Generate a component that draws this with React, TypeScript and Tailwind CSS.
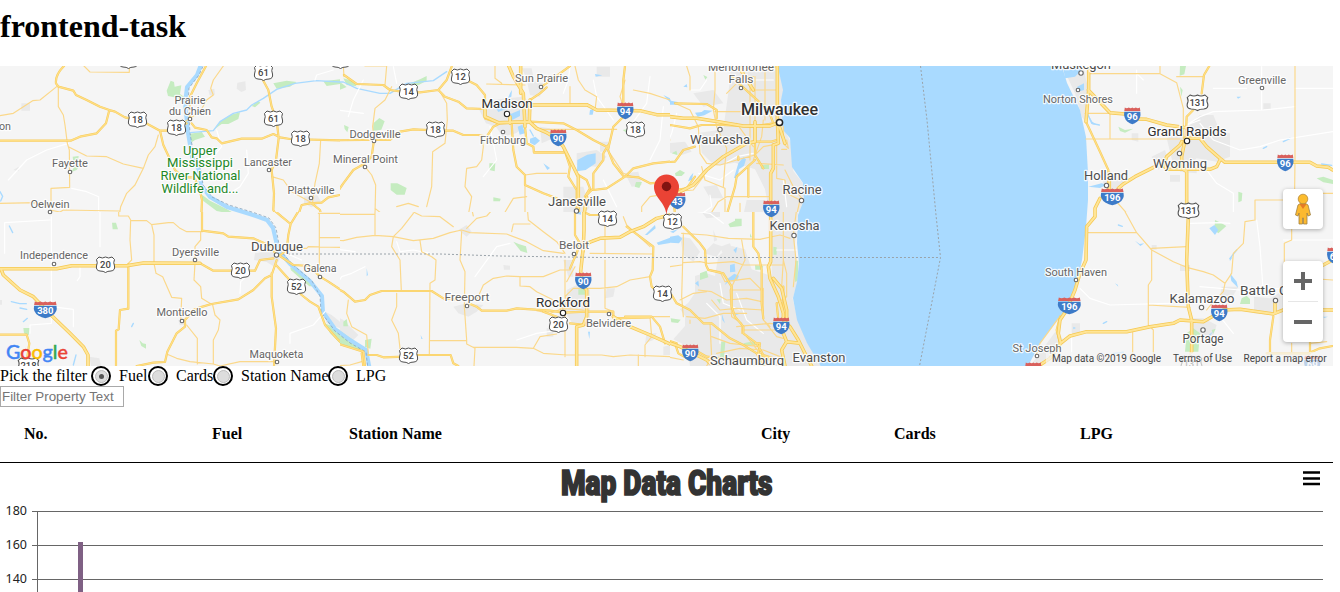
import React from "react";

type Tile = {
  x: number;
  y: number;
  urban?: string[];
  parks?: string[];
  lakes?: string[];
  streams?: string[];
  locals?: string[];
  minor: string[];
  major: string[];
  motorway?: string[];
};

// Each tile covers 340 map pixels and stores its geometry at triple resolution.
const tiles: Tile[] = [
  {
    x: 0,
    y: 60,
    urban: ["M64 130h26v22h-26z", "M712 68l24-4 2 26-14 6-14-10z", "M625 90l18-4 2 18-16 2z", "M40 330l16-10v14z", "M912 410l40-4 12 20-30 16-22-12z"],
    parks: [
      "M500 92l12-30 10 4 2 14 20-4-4 26 12 8v22l-18-18-30-6z",
      "M565 222l40-6 10 14-30 10-14 10z",
      "M640 210l20-25 30-20 30-8-5 20-30 15-20 0-30 22z",
      "M820 70l40-8 30 4-20 14-40 6z",
      "M970 64l50-6v14l-40 6z",
      "M218 290l18-2-2 14-14 4zM222 322l18-6-10 14-16 6z",
      "M600 400l30 22 50 25 30 18-60-12-40-30z",
      "M755 138l20-16 6 6-16 14z",
    ],
    streams: ["M1020 66L950 62L885 70L830 88L790 115L755 135L740 150L700 160L660 185L640 212L570 218", "M0 395l8 14-6 14"],
    locals: ["M25 360L80 300L140 270L205 250", "M215 385L260 395L296 410L296 465", "M610 300L640 290L665 260L650 210", "M740 270L745 340L720 380L690 400", "M945 60L950 45L1000 30"],
    minor: [
      "M170 80L120 120L98 122L40 160L0 167",
      "M175 80L175 140L190 165L195 195L202 250L208 270L209 382L153 385L153 440L110 428L0 430",
      "M205 260L260 288L320 290L370 312L430 325",
      "M475 225L465 260L445 285L430 325L405 375L380 400L362 440L356 478",
      "M252 18L270 36L388 37L388 18",
      "M150 450L180 456L190 450L358 453",
      "M670 18L640 60L632 85L640 105L620 120L600 155L570 175",
      "M962 241L958 310L945 370L938 425",
      "M815 350L850 360L875 395L935 428",
      "M570 175L555 185",
    ],
    major: [
      "M192 18Q165 45 168 70L175 80L220 92L228 105L260 120L300 140L328 150L345 155L375 172L430 185L480 212L505 212L560 190",
      "M328 150L318 190L290 220L240 230L212 242L0 242",
      "M480 212L490 255L525 330L550 352L582 352L598 385L606 420L604 468",
      "M575 190L585 203L620 210L635 232L650 235L665 250L725 236L785 236L820 222L840 232L870 237L1020 241",
      "M570 175L570 110L590 70L618 18",
      "M790 40L790 62L805 90L815 140L830 180L836 235L828 300L815 330L822 400L820 450L830 468",
      "M1020 405L985 412L965 428L930 430L905 435L893 470",
      "M935 430L960 450L964 468",
    ],
  },
  {
    x: 0,
    y: 210,
    urban: ["M765 130l50-8 25 25-15 25-25-16-38-6z", "M965 300l30 15 25 20v20l-40-15z", "M268 440l30 5 5 23h-30z", "M0 270h6v14h-6z", "M535 330l20-4 4 16-20 4z"],
    parks: ["M336 38l12 0 6 20-16 0z", "M70 354l20 0-4 22-14-6z", "M418 390l10 10 10 2v14l-14-8z", "M975 340l45 20v40l-30-30z", "M870 172l30 12 40 45-12 0-55-48z"],
    streams: ["M34 275l25 6 20 0", "M70 335l12-10", "M28 48l10 20", "M60 294l20 4", "M220 465l8-30", "M400 340l-5 10"],
    locals: ["M154 20V290L220 298V350", "M14 130V38L150 30", "M154 298V340L90 345V370", "M300 0V110", "M975 305L940 345L870 370L870 400", "M240 165L240 200L232 212", "M720 250L722 215L740 200", "M870 135L905 150"],
    minor: [
      "M356 -4V18L385 18L392 30L390 90L395 150L385 160",
      "M392 32L440 32L455 44L505 38L520 38L540 55L560 65L608 65",
      "M455 44L462 75L462 160L468 190L488 200L515 262L545 265L542 330",
      "M602 65L602 90L585 110L585 160L582 210L602 230L605 265L638 285",
      "M560 345L592 385L592 462",
      "M638 285L645 315L660 330L655 360L640 390L640 462",
      "M500 432L530 445L570 455L640 462L660 468L720 455L825 455",
      "M860 115L920 115L925 110L1020 112",
      "M955 10H1020M958 10V165M958 83H1020",
    ],
    major: [
      "M606 -4V62L670 70L685 80L760 85L790 98L815 110L828 135",
      "M817 -4L845 20L872 42L865 75L860 120L838 138",
      "M900 -4L872 42",
      "M385 162V296L360 300L356 358L348 362V468",
      "M820 145L780 150L765 182L640 182L600 160",
      "M410 468L460 458L495 456L502 425L530 370L555 350L555 330L580 300L600 292L635 282L715 268L760 240L795 205L815 195L830 150",
      "M815 190L815 260L828 355L822 468",
      "M828 165L860 200L905 255L930 275L955 290L975 345L1010 385L1020 395",
      "M835 135L880 165L930 168L960 200L985 215L1020 238",
      "M0 374L80 374L88 400L82 440",
    ],
    motorway: ["M0 176H170L215 167H380L430 159L600 160", "M4 180L10 195L60 240L100 260L150 312L210 370L250 410L264 435L264 468"],
  },
  {
    x: 330,
    y: 60,
    urban: [
      "M448 150l40-30 90-10 30 20-10 60-40 30-40 10-20-30-30-10z",
      "M575 25l30 0 5 25-20 5zM590 60l50 10-10 40-30-5z",
      "M800 20h40v30h-40zM630 200l30 5 10 30-35 15z",
      "M740 280l60-10 30 20-30 30-60-5z",
      "M885 340l40-5 10 40-30 5zM700 380l60 0 20 60-20 25h-60z",
      "M810 245l30 0v30h-30z",
    ],
    parks: ["M130 190l18-16 16 10-10 25-25 4z", "M182 370l20 0 28 14-6 20-24 0-18-14z", "M478 310l18 0-2 24-16-4z", "M918 366l18 0-8 18-14-4z", "M490 412l22 4-2 8-20 0z", "M40 55l30 8 10 16-30-4z", "M0 60l30 6 20 15-20 8z", "M240 70l30-12 20-10 0 14-30 16z", "M42 195l14 6-4 16-8-10z", "M878 210l20-4v18z"],
    lakes: ["M535 165l35-15 0 18-28 14z", "M563 200l14-6 8 26-16 4z", "M600 236l16-6 14 12-16 14-14-8z", "M742 300l30-16 25-4 0 30-30 20-26 4z", "M540 100l6-10-2 20-10 4z", "M780 150l12-4-4 18-10 0z", "M640 310l20 14-8 6z", "M795 42l22 4-20 4z", "M1000 105l20 10v12z", "M495 140l25-14 10 20-25 10z"],
    streams: ["M0 66L40 66L80 85L150 100L180 100L230 70L310 62L350 35", "M600 210l10 18"],
    locals: ["M200 70L190 20", "M100 60L70 120L55 170", "M720 20L715 60L700 100", "M790 60L800 110L850 180", "M960 50L950 130L900 200", "M480 200L500 300L460 350", "M1000 140L990 240L960 300", "M820 360L860 440", "M20 150L100 160"],
    minor: [
      "M40 18L42 50M105 18H170L165 75",
      "M185 80L165 120L135 145L128 200L132 240",
      "M330 95L350 130L352 180L345 250L308 275L305 380L290 440",
      "M105 320L125 345L137 375L135 465",
      "M455 230L460 260L455 300L440 320L410 325L405 380L425 410L415 465",
      "M470 72L585 75M495 18V55L515 70",
      "M735 18L745 60L765 90L800 110L795 150",
      "M585 345L620 340L710 340M585 375V465",
      "M520 465L550 415L590 410",
      "M0 440L30 465M135 445L160 465M200 440L235 430L265 440",
      "M840 280L880 340L905 350",
      "M885 60L870 110L882 145",
      "M610 275H700",
      "M910 90L960 100L1020 120",
      "M630 208H860",
      "M935 465V440L960 410L1020 400",
      "M720 80L720 130",
    ],
    major: [
      "M42 45L80 72L160 75L180 90L215 95L270 97L325 90L350 60L365 20",
      "M400 55L440 75L465 105L465 140",
      "M325 90L345 110L385 125L410 145L465 147",
      "M0 241L100 240L180 240L210 215L250 208L330 212L370 212L400 225L445 225L470 230L490 200L510 190",
      "M132 240L125 290L105 310L70 330L40 370L20 400L0 412",
      "M650 82L630 100L600 120M720 18L690 40L635 80",
      "M600 185L700 190L740 210L790 240L830 260L850 310L880 348L925 352L960 370L1020 365",
      "M545 190L550 270L560 320L585 345L585 375L640 400L680 415",
      "M835 255L820 280L820 300L790 340L790 385",
      "M790 390L830 385L885 350L910 325L970 310L1020 305",
      "M745 345L770 360L780 385L765 410L790 385",
      "M700 260L720 320L715 350L740 390L740 465",
      "M885 18L880 60L880 150M465 140L465 175L510 190L600 185",
      "M585 200L590 250L610 260L612 278H700",
      "M835 265L850 200L880 170",
    ],
    motorway: ["M535 15L550 50L580 100L585 200M572 18V100M600 120L598 185M595 135L770 134L800 150L930 152L980 164H1020", "M598 185L620 205L650 218L680 235L700 260L725 310L745 350V465", "M465 140V170L505 188L600 185M540 190V170M770 412L762 465"],
  },
  {
    x: 330,
    y: 210,
    urban: ["M370 290l40-10 50 5-20 20-25 15-30-10z", "M385 60l25-15 15 20-15 15z", "M710 240l40-20 30 20v90l-50 15-25-40z", "M700 150l30 0 0 50-15 0z", "M830 235l25 0-5 25-25 5z", "M520 165l20 2 0 12-18 0z", "M0 310l40 20 45 45-20 20-65-60z", "M950 370l30 0-10 20-25 10z", "M1000 410l20-5v30h-20z", "M650 355l20 0v25h-20z"],
    parks: ["M550 95l18 8 20 6 4 20-20-6z", "M40 335l10-8 4 22-14 0z", "M0 350l35 15 70 50-5 8-70-20-30-35z", "M105 390l20-4-4 30-16-5z", "M745 238l20-2 0 18-20 0z", "M50 60l8 0z"],
    lakes: ["M945 75l30-30 2 10-25 20z", "M980 98l40-15v16l-35 6z", "M110 175l4 20-4 4z", "M272 375l6 12-4 0z", "M774 365l6 0-2 22z", "M735 10l18-10v14z"],
    streams: [],
    locals: ["M0 115L75 125M200 95L210 125L250 120L300 130", "M10 240L35 200L65 190L105 170", "M560 390L620 370L690 360", "M435 200L500 110L540 100"],
    minor: [
      "M0 90L40 92L80 82L135 76L190 80L250 92L310 85L360 68L395 60L420 68L530 72L590 95L640 122L700 130",
      "M135 -4V76M0 13H135M230 -4L275 18L330 20L350 35L370 50M190 80L215 55L250 10L252 -4",
      "M190 80L185 110L210 150L214 242M270 92L275 125L305 140L318 150L315 210L300 220L298 435",
      "M395 65L390 150L405 185L403 290L410 390L410 402L435 415L432 468",
      "M425 -4L430 18M592 -4L595 30L640 65L680 95L705 130M545 65L550 42L600 42",
      "M410 55L440 25L470 18L490 -4",
      "M200 250L200 290L185 330L205 370L210 415",
      "M55 270L50 310L65 350L110 375L115 430",
      "M440 270L460 225L490 205L530 198L570 200L640 200L690 180L720 180L738 130",
      "M570 200V228L600 230L620 245L670 270M705 150V440M710 215L735 170",
      "M300 392H410M430 412L560 412L610 415L630 380L680 372M610 415L640 430L710 435H815L850 440L900 435L1020 440",
      "M690 295L720 280L705 260L730 235H810L860 230L900 210L960 200",
      "M825 150V295L850 305M825 -4V130M780 130L970 132M0 468L60 465L95 455M925 435V468M945 440V405L965 380L960 320L1020 320",
      "M620 302L660 310L700 295L760 300",
      "M880 20L890 45L960 110",
    ],
    major: [
      "M0 225L40 245L75 275L105 270L120 255L155 243L305 243L340 265L380 268",
      "M415 280L440 290L455 302L530 302L560 295L660 302L700 308L770 305L850 305L850 325L960 322",
      "M115 435L140 435L160 442L225 440M240 435H362L370 460L385 468",
      "M0 370L20 400L100 425L105 468M95 430L100 468",
      "M735 -4V75L750 100L740 130L720 175",
      "M820 85L790 90L765 110L755 140",
      "M890 50L970 110L968 180L960 200L965 230L1000 260",
      "M720 340L770 345L770 320",
      "M640 305L680 320",
      "M885 320H965L990 350L1005 400M820 15L780 15L760 5",
    ],
    motorway: ["M762 -4V60L760 110L752 185L760 230L770 240V320L760 345L740 350V468", "M770 100L810 85L870 82L900 65L940 50L980 25L1020 15", "M850 320L900 350L960 375L1020 402"],
  },
  {
    x: 640,
    y: 60,
    urban: [
      "M270 60l60-40 85-2 15 70-5 40 10 85 20 40 5 80 35 45-5 50-10 40-90 0-15-80-30-60-60-20-60 10-40-40-5-60 70-10z",
      "M260 18h150v80h-110z",
      "M75 250l60-5 20 30-30 10-50-10z",
      "M160 100l60-10 30 40-60 10z",
      "M190 380l40-5 20 40-40 0z",
      "M320 420h60v45h-70z",
    ],
    parks: ["M105 340l15-10 15 8-10 10-18 0z", "M362 315l25-2 0 14-24 0z", "M95 280l14-8 4 14z", "M0 370l8 0v6z", "M190 45l12 6-6 8z"],
    lakes: ["M75 120l10-14 8 16 20 4 0 8-25 0z", "M165 158l20-2 8-6 25 2-25 14-20 4z", "M295 310l15-18 8 6-6 20-15 10-5 26-10 0z", "M150 350l10-12-4 22-12 4z", "M130 80l10-8 2 10zM80 295l8 6-10 4z", "M170 450l10-15z"],
    locals: ["M110 160L95 220L60 300L20 330", "M175 340L240 360L280 330", "M40 60L30 130M200 60L180 90L150 90", "M210 405L215 440L180 465", "M330 60L400 60M255 310L290 290L340 280", "M430 360L440 440"],
    minor: [
      "M0 85L60 110L85 120M80 18V80L75 100M140 18L150 50L150 90",
      "M0 250L0 240L60 250L90 240",
      "M225 18V90L220 150L230 200L260 265L255 310L250 380",
      "M105 130L150 150L160 170L175 200L180 280L200 310L240 315L290 300L345 285",
      "M185 320L195 360L255 385V465",
      "M225 155H330M330 50V300M345 50V190M375 18V180M350 30L415 20M330 90H410",
      "M430 200V250L445 265L440 240M345 285L370 260L420 250",
      "M410 250L410 355L435 360L440 400L480 420L470 465",
      "M435 330L460 380L485 415M350 310L430 315",
      "M345 240L320 250M100 395L160 390L190 350",
      "M260 100L280 80L310 50L340 50",
      "M210 465L235 425L260 410H390M0 310L20 335L30 370",
      "M370 180L365 230L340 300",
      "M300 465V430M290 190L340 260M440 268H425",
    ],
    major: [
      "M0 305L60 308L105 305L130 270L165 260M0 365L45 367",
      "M105 130L200 132L230 150V175M0 206H45L90 195L150 205L185 195H250L340 200L400 190",
      "M295 300V290M325 318V410M345 190V285L370 325",
      "M345 245H395L410 240",
      "M260 465L285 380L290 350L345 300",
      "M275 50L340 110L385 150L400 190",
      "M100 410L105 465M105 390L140 385L165 350",
    ],
    motorway: ["M0 154H40L75 168L130 175H170L235 185L310 198H390L410 190", "M412 18V180L415 250L400 255V325L392 340V465", "M295 18L340 90M415 190L435 250", "M345 185V245L320 250L250 290L200 330L160 375L110 400L80 440L60 465"],
  },
  {
    x: 640,
    y: 210,
    urban: [
      "M395 0h80l-10 100 8 120-15 45 15 65 70 138H150l-10-60-40-20 35-40 0-30-15-20 25-20 20-30 0-50 30-10 30 10 10-60 40-30 40 10 20 60 60 20z",
      "M190 130l30-30 30 10-20 30zM120 80l30 5 30 40-20 30-30-20z",
      "M180 0h60v20l-40 5z",
      "M240 110l30-10 10 30-30 5zM220 60l12 30-10 5z",
      "M10 390l20 15-10 30-20 0z",
    ],
    parks: ["M180 190l20-8 5 20-25 8z", "M265 42l20-10 0-6 20 0v22l-35 4z", "M465 152l10 0-2 60-8 4z", "M92 325l30 4-8 10-20-2z", "M345 165l25 2-4 12-20 0z", "M400 110l10 2 0 22-10 0z", "M310 400l30-6 15 10-40 4z", "M244 395l12 0-4 50-12 0z", "M230 268l12 0-2 14zM430 250l10 10-6 5z", "M330 70l6 12-6 0z"],
    lakes: ["M50 98l30-16 35-6 12 10-10 14-30-2-30 8z", "M18 70l26-22 0 10-22 18z", "M270 165l14-4 2 24-16 2z", "M265 205l18-14 14 6-6 14-22 2-15 12z", "M165 220l10-8 2 18z", "M280 120l12-10-4 20zM285 310l12 2-10 4z", "M90 65l25-8-15 12z", "M245 310l10 30-8-10z"],
    locals: ["M140 0L210 10L250 40M40 20L60 60", "M240 220L250 280L300 300M410 60L470 60M410 120H470", "M290 250L320 330L370 370M60 130V60", "M200 280L240 320L240 400"],
    minor: [
      "M130 70V100L128 155L125 260L130 320M130 158L180 155L205 160L280 155L310 165H430",
      "M35 200L75 180L90 170L125 165M125 70L200 75L265 85L360 88L420 75L450 85",
      "M305 90L315 150L290 200L270 240L275 320L305 340L305 370",
      "M430 -4V75L430 150L425 230M470 -4L460 75L468 150L460 230",
      "M205 178L240 185L255 215L330 205L365 240M175 240L215 245L260 270L320 265L365 275",
      "M120 270L160 250L200 245M275 240H370M210 340L215 440L200 468M215 270L240 300L290 295L370 300",
      "M140 320L195 325L250 310L320 310M290 350L390 340L430 345M305 360H430",
      "M0 440H80L130 450M10 440V385L35 360M150 330V340M35 90L0 70M35 330V205",
      "M215 380L270 400L360 410M230 430L300 415L370 420L420 440M320 380L360 430L370 468",
      "M430 150L440 190L440 260L410 280",
      "M370 330L410 380L430 385M370 235V330L390 350",
    ],
    major: [
      "M0 75L38 110L35 200L45 225L60 240M95 255L110 280L150 300L190 340L215 340L270 385L310 405L350 430L370 465",
      "M130 50L180 100L195 120L198 165L205 180L250 190L275 230V290L285 320L310 350V370L350 400L370 435L400 445",
      "M340 -4V110L355 130L365 180V280L370 325",
      "M0 323H40L70 360L80 390L110 400M410 280L415 330L440 330M430 230L430 300",
      "M105 400L115 430L150 450",
      "M345 400L360 400L355 430L390 450",
      "M165 420L200 440L290 450",
    ],
    motorway: ["M0 365L50 385L120 410L200 450L210 460", "M392 -4V155L385 170L390 205L415 260L430 310L430 330L450 350L475 390L500 440L515 468", "M400 205L425 235L440 300L440 330M430 370L440 395L425 420L435 468", "M0 55L40 35L75 15M440 395L480 400"],
  },
  {
    x: 1000,
    y: 60,
    urban: [
      "M190 25l60-5 15 70-5 100-15-20-20-70z",
      "M500 235l60-30 40-40 40 0 20 50 30 5 0 70-40 15-60-10-40 40-30-20z",
      "M510 345h30v20h-30zM540 300l50 0 0 40-50-5z",
      "M455 290l40-20 10 30-30 30z",
      "M310 340h60v40l-30 10-30-20z",
      "M395 220l20 0 0 25-20-5z",
      "M790 130h22v18h-22z",
    ],
    parks: ["M540 18l18 0-5 25-14 4z", "M355 200l20 10 25-4-25 12-15-5z", "M715 395l12 4-2 24-10 4z", "M950 355l20-5 30 10v12l-30-5z", "M480 75l6 15z", "M540 80l8 10-4 20z"],
    lakes: ["M190 25l25 5 10-10 20 10-20 20-30 5z", "M232 80l20-10 0 20-20 6z", "M265 380l40-10 15 4-20 10z", "M710 110l14 0-10 6z", "M265 165l12 20 15 10-15-2z"],
    streams: ["M262 160L275 190L298 195", "M850 245l20-10M790 265l10-5M965 312l30 4"],
    locals: ["M550 200L600 170L640 155L790 150L885 140", "M410 30V100M640 85H740M785 20V150", "M600 190L640 240L720 270L780 260L840 240L998 215", "M620 330L650 370L700 400V465", "M885 85H998M430 60L410 40M560 195L600 180"],
    minor: ["M270 41H480L530 68L550 145V235M480 18V40M530 50H610", "M255 160H330V237M258 237H540", "M885 18V300L883 465", "M345 420L385 465M765 465V420H860L870 400H998"],
    major: ["M628 18L612 45L605 100M585 130L580 150L560 170L557 240M258 185L300 275L325 330V390", "M265 90L330 158"],
    motorway: [
      "M266 18V90L258 185M265 90L330 158L375 162M410 177L440 178L500 195L560 203",
      "M555 235L600 235L620 260L660 295L675 307H840M870 307H930L950 318L985 322L998 330",
      "M545 245L540 255L500 290L490 315L500 328L630 328L650 320L660 300",
      "M300 415L285 445V470M355 385L370 372L405 350L465 320M555 240L545 290V325L560 335V440",
      "M328 340V390",
    ],
  },
  {
    x: 1000,
    y: 210,
    urban: ["M215 340h25v30l-25 5z", "M570 325h40l40 20-10 30-30 10-30-15z", "M762 260l50 5 30-20v60l-30 10-50-5z", "M665 230l50 0-20 35-35 0z", "M540 165h30v18h-30z", "M455 105l15 0 0 14-15 0z", "M170 360l20 30-30 40-50 38h-20z"],
    parks: ["M645 30l20 10 14 8-24 22-12-10z", "M560 370l20-15 20 15-5 55-40 0z", "M725 265l15-8 10 10 0 15-30 0z", "M635 360l12-4-8 16z"],
    lakes: ["M628 55l15-10 12 15-10 15z", "M690 190l20 25 4 18-20-20z", "M405 92l14 10 14-2-12 8z", "M345 220l8 4 2 6z", "M220 350l8 4-8 4z", "M688 145l10-4-8 12zM620 380l20-16-15 20z", "M970 320l14 0-12 4z"],
    streams: ["M225 70L245 40", "M710 120L690 145", "M355 45l12 4", "M310 340l10-5M340 430l30-3"],
    locals: ["M240 235L270 265L330 285L510 280", "M770 30L780 110L790 250M570 40L660 38L690 40", "M660 320L700 370M600 230L720 240L850 235", "M215 370V440L160 460", "M850 90H998"],
    minor: [
      "M262 68H410L455 120V210L445 225V345L460 360V440M370 -4L410 68L455 120L520 155L560 172L610 185L640 195L675 220L670 245L640 275L620 300",
      "M455 115L560 110M445 285L570 292",
      "M765 -4V30L735 35L730 100L700 130L695 190L675 220M875 50V90L853 100V200L998 210",
      "M398 365V440M570 425V468M875 400V430M980 395L930 400",
      "M175 325L120 400L110 430",
    ],
    major: ["M998 408L960 415L925 430M820 320L810 390V430M180 320L170 360L180 400", "M930 380V430H800"],
    motorway: [
      "M285 -4V20L260 50L258 150L240 190L225 240L200 300L180 330L175 370L182 400M182 400L210 378L260 365L380 365L450 350L520 340L540 330L610 335L640 318M670 300L720 298L820 312L850 300H998",
      "M565 20L560 150L565 290L575 330V425M182 400L150 445L120 465M970 165L998 150M825 280V310",
    ],
  },
];

const shore =
  "M779 60L779 72L783 90L781 100L783 130L790 138L792 167L803 183L804 200L798 215L797 243L799 263L797 282L793 298L797 320L807 343L823 370H1026L1040 343L1063 313L1077 283L1082 260L1086 227L1088 200L1088 173L1086 137L1080 110L1067 83L1060 60Z";

type Label = [text: string, x: number, y: number, width: number, kind: "s" | "m" | "l" | "xl" | "p", dot?: [number, number]];

const labels: Label[] = [
  ["Prairie", 190, 104, 31, "s"],
  ["du Chien", 190, 115, 42, "s", [190, 119]],
  ["on", 5, 130, 12, "s"],
  ["Fayette", 70, 167, 36, "s", [70, 172]],
  ["Lancaster", 268, 166, 48, "s", [269, 170]],
  ["Platteville", 311, 194, 47, "s", [311, 198]],
  ["Oelwein", 50, 208, 39, "s", [50, 212]],
  ["Upper", 200, 155, 34, "p"],
  ["Mississippi", 200, 167, 66, "p"],
  ["River National", 200.5, 180, 80, "p"],
  ["Wildlife and...", 200, 193, 77, "p"],
  ["Independence", 54, 259, 68, "s", [54, 264]],
  ["Dyersville", 195.5, 256, 47, "s", [195, 260]],
  ["Dubuque", 277, 251, 52, "m", [276.5, 255]],
  ["Galena", 320, 272, 33, "s", [320, 277]],
  ["Monticello", 182, 316, 51, "s", [182, 321]],
  ["Maquoketa", 276.5, 358, 54, "s", [277, 362]],
  ["Sun Prairie", 541.5, 82, 53, "s", [541, 87]],
  ["Madison", 507, 108, 51, "l", [507, 114]],
  ["Fitchburg", 503, 144, 46, "s", [503, 132]],
  ["Dodgeville", 375, 138, 51, "s", [374, 141]],
  ["Mineral Point", 365.5, 163, 65, "s", [365, 167]],
  ["Janesville", 577, 206, 58, "m", [576.5, 211]],
  ["Beloit", 574, 249, 30, "s", [574, 254]],
  ["Freeport", 467, 301, 45, "s", [467, 306]],
  ["Rockford", 563, 307, 54, "l", [563, 313]],
  ["Belvidere", 608.5, 327, 45, "s", [609, 314]],
  ["Menomonee", 741, 71, 66, "s"],
  ["Falls", 741, 83, 25, "s", [741, 88]],
  ["Milwaukee", 779.5, 115, 77, "xl", [779.5, 122.5]],
  ["Waukesha", 720, 144, 60, "m", [720, 129.500]],
  ["Racine", 802, 194, 39, "m", [801.5, 200.5]],
  ["Kenosha", 794.5, 230, 50, "m", [794, 235.5]],
  ["Schaumburg", 747, 365, 74, "m"],
  ["Evanston", 819, 362, 53, "m"],
  ["Muskegon", 1081, 69, 60, "m", [1081, 73]],
  ["Norton Shores", 1078, 103, 70, "s", [1078, 90]],
  ["Greenville", 1262, 84, 48, "s", [1262, 88]],
  ["Grand Rapids", 1187, 136, 79, "l", [1187, 141]],
  ["Wyoming", 1180, 168, 54, "m", [1179.5, 153.500]],
  ["Holland", 1106, 180, 44, "m", [1106.5, 185.5]],
  ["South Haven", 1076, 276, 62, "s", [1076, 280]],
  ["Kalamazoo", 1202, 303, 65, "m", [1201.5, 307.5]],
  ["Battle Creek", 1277, 295, 74, "m", [1275.5, 300.5]],
  ["Portage", 1203, 343, 41, "m", [1203, 330]],
  ["St Joseph", 1037, 352, 49, "s", [1037, 356]],
];

const labelStyle = {
  s: { size: 11.8, fill: "#666666", weight: 400, r: 1.8 },
  m: { size: 13.2, fill: "#4d4d4d", weight: 400, r: 2.2 },
  l: { size: 13.7, fill: "#303030", weight: 400, r: 2.7 },
  xl: { size: 16.2, fill: "#303030", weight: 500, r: 3.1 },
  p: { size: 13.3, fill: "#1c8828", weight: 400, r: 0 },
};

const usRoutes: [number, number, string][] = [
  [137, 119, "18"], [176, 127, "18"], [263, 72, "61"], [273, 118, "61"], [300, 138, "18"],
  [105, 264, "20"], [240, 270, "20"], [296, 286, "52"], [28, 365, "218"], [340, 60, "14"],
  [460, 76, "12"], [408, 91, "14"], [435, 129, "18"], [635, 129, "18"], [607, 218, "14"],
  [662, 293, "14"], [558, 324, "20"], [408, 355, "52"], [672, 221, "12"],
  [1197, 102, "131"], [1188, 210, "131"], [1191, 363, "131"], [128, 60, "52"],
];

const interstates: [number, number, string][] = [
  [45, 310, "380"], [625, 111, "94"], [558, 138, "90"], [583, 281, "90"], [677, 201, "43"],
  [771, 209, "94"], [781, 326, "94"], [690, 353, "90"], [1132, 116, "96"], [1285, 163, "96"],
  [1112, 197, "196"], [1069, 306, "196"], [1219, 313, "94"], [1335, 256, "69"], [1033, 371, "94"], [1312, 364, "69"],
];

function Roads() {
  const lines = (d: string | undefined, stroke: string, w: number) =>
    d ? <path d={d} stroke={stroke} strokeWidth={w} fill="none" strokeLinejoin="round" strokeLinecap="round" /> : null;
  const place = (t: Tile) => `translate(${t.x} ${t.y}) scale(0.33333)`;
  return (
    <>
      <defs>
        {tiles.map((t, i) => (
          <clipPath id={`tile${i}`} key={i}>
            <rect x={t.x === 640 ? 670 : t.x === 330 ? 340 : t.x} y={t.y === 60 ? 60 : 212} width={t.x === 0 ? 340 : t.x === 330 ? 330 : 350} height={t.y === 60 ? 152 : 160} />
          </clipPath>
        ))}
      </defs>
      {tiles.map((t, i) => (
        <g key={i} clipPath={`url(#tile${i})`}>
          <g transform={place(t)}>
            <path d={t.urban?.join("")} fill="#e9e9e9" />
            <path d={t.parks?.join("")} fill="#c5ecc0" />
          </g>
        </g>
      ))}
      <path d={shore} fill="#a9daff" />
      <path d="M202 62L197 75L187 87L185 103L188 133L192 157L199 170L201 185L210 197L227 207L253 215L267 220L273 228L278 250L290 264L310 281L322 296L323 312L335 329L350 340L366 350L370 370" fill="none" stroke="#a9daff" strokeLinejoin="round" strokeWidth="4" />
      <path d="M205 62L199 75L189 88L188 103L190 133L194 157L201 170L203 185L212 197L229 205L255 213L269 218L276 228L280 250L292 264L312 281L320 296L321 312L335 331L350 343L366 352L368 370" fill="none" stroke="#8aa5bd" strokeWidth=".8" strokeDasharray="3 2" />
      {tiles.map((t, i) => (
        <g key={i} clipPath={`url(#tile${i})`}>
          <g transform={place(t)}>
            <path d={t.lakes?.join("")} fill="#a9daff" />
            {lines(t.streams?.join(""), "#a9daff", 4)}
            {lines(t.locals?.join(""), "#ffffff", 3.5)}
            {lines(t.minor.join(""), "#fbd88a", 3.5)}
            {lines(t.major.join(""), "#f7cc5e", 6.6)}
            {lines(t.major.join(""), "#ffdf85", 3.6)}
            {lines(t.motorway?.join(""), "#f5c852", 10.5)}
            {lines(t.motorway?.join(""), "#ffe597", 6)}
          </g>
        </g>
      ))}
      <path d="M288 254H440L500 256L600 257.500H940M920.500 66L927 120L936 215L940.500 257.500L930 312L919.500 366" fill="none" stroke="#9aa3aa" strokeWidth="1" strokeDasharray="2 2" />
    </>
  );
}

function MapView() {
  return (
    <div className="relative h-[300px] w-[1333px] overflow-hidden bg-[#f5f5f5]">
      <svg className="block h-[300px] w-[1333px]" viewBox="0 66 1333 300" fontFamily="Roboto, sans-serif" textAnchor="middle">
        <Roads />
        {usRoutes.map(([x, y, n], i) => (
          <g key={i} transform={`translate(${x + 0.5} ${y + 0.5})`}>
            <path
              transform={n.length > 2 ? "scale(1.14 1)" : undefined}
              d="M-6.500 -7.500Q-3 -5.500 0 -7.500Q3 -5.500 6.500 -7.500L9 -5Q7.500 -2 9 1.500Q9.800 6 5.500 6.500Q2 6.500 0 8Q-2 6.500 -5.500 6.500Q-9.800 6 -9 1.500Q-7.500 -2 -9 -5Z"
              fill="#fff"
              stroke="#505050"
              strokeWidth="1"
            />
            <text y="3.500" fontSize="9.500" fontWeight="500" fill="#454545">{n}</text>
          </g>
        ))}
        {interstates.map(([x, y, n], i) => (
          <g key={i} transform={`translate(${x + 0.3} ${y})`}>
            <g transform={n.length > 2 ? "scale(1.4 1)" : undefined}>
              <path d="M-7.500 -8.500Q-5.500 -7 -3.500 -8.500Q-1.500 -7 0 -8.500Q1.500 -7 3.500 -8.500Q5.500 -7 7.500 -8.500L8 -5H-8Z" fill="#d9605c" />
              <path d="M-8 -4.200H8Q9 2 5 5.500Q2.500 7.500 0 8.300Q-2.500 7.500 -5 5.500Q-9 2 -8 -4.200Z" fill="#3d7bc8" />
            </g>
            <text y="4.300" fontSize="9.500" fontWeight="700" fill="#fff">{n}</text>
          </g>
        ))}
        {labels.map(([text, x, y, w, kind, dot], i) => {
          const s = labelStyle[kind];
          return (
            <g key={i}>
              {dot && <circle cx={dot[0]} cy={dot[1]} r={s.r} fill="#fff" stroke={kind === "xl" || kind === "l" ? "#222" : "#666"} strokeWidth={kind === "xl" ? 1.5 : 1.1} />}
              <text x={x} y={y} textLength={w} lengthAdjust="spacingAndGlyphs" fontSize={s.size} fontWeight={s.weight} fill={s.fill} stroke="#fff" strokeOpacity=".85" strokeWidth="2.500" strokeLinejoin="round" paintOrder="stroke">{text}</text>
            </g>
          );
        })}
        <path d="M666.500 215C665.500 202 654 198 654 187A12.500 12.500 0 0 1 679 187C679 198 667.500 202 666.500 215Z" fill="#ea4335" />
        <circle cx="666.500" cy="186.500" r="4.700" fill="#811411" />
        <text x="6" y="358.500" textAnchor="start" textLength="62" lengthAdjust="spacingAndGlyphs" fontFamily="Lato, sans-serif" fontSize="19.500" fontWeight="500" strokeLinejoin="round">
          <tspan fill="#4285f4" stroke="#4285f4" strokeWidth=".4">G</tspan><tspan fill="#ea4335" stroke="#ea4335" strokeWidth=".4">o</tspan><tspan fill="#fbbc05" stroke="#fbbc05" strokeWidth=".4">o</tspan><tspan fill="#4285f4" stroke="#4285f4" strokeWidth=".4">g</tspan><tspan fill="#34a853" stroke="#34a853" strokeWidth=".4">l</tspan><tspan fill="#ea4335" stroke="#ea4335" strokeWidth=".4">e</tspan>
        </text>
        <rect x="1046" y="352" width="287" height="14" fill="#f5f5f5" opacity=".7" />
        <g fontSize="10" fill="#444" textAnchor="start">
          <text x="1052" y="362" textLength="109" lengthAdjust="spacingAndGlyphs">Map data ©2019 Google</text>
          <text x="1173" y="362" textLength="59" lengthAdjust="spacingAndGlyphs">Terms of Use</text>
          <text x="1243.500" y="362" textLength="83" lengthAdjust="spacingAndGlyphs">Report a map error</text>
        </g>
      </svg>
      <div className="absolute right-[10px] top-[123px] flex flex-col gap-8">
        <div className="flex h-10 w-10 items-center justify-center rounded-sm bg-white shadow-[0_1px_4px_rgba(0,0,0,0.3)]">
          <svg className="h-8 w-5" viewBox="0 0 20 32">
            <path d="M5 12L2.500 22L5 23L6 20V31H9.500V25H10.500V31H14V20L15 23L17.500 22L15 12L12 10H8Z" fill="#fcb92f" stroke="#a18141" strokeWidth=".8" />
            <path d="M6.500 11L10 16L13.500 11Z" fill="#e57a25" />
            <circle cx="10" cy="6" r="4.800" fill="#fcbc2d" stroke="#b5893c" strokeWidth=".8" />
          </svg>
        </div>
        <div className="flex h-[81px] w-10 flex-col items-center rounded-sm bg-white shadow-[0_1px_4px_rgba(0,0,0,0.3)]">
          <svg className="h-10 w-10" viewBox="0 0 40 40"><path d="M11 20H29M20 11V29" stroke="#666" strokeWidth="4" /></svg>
          <div className="h-px w-[30px] bg-[#e6e6e6]" />
          <svg className="h-10 w-10" viewBox="0 0 40 40"><path d="M11 20H29" stroke="#666" strokeWidth="4" /></svg>
        </div>
      </div>
    </div>
  );
}

function Radio({ label, checked, width }: { label: string; checked?: boolean; width: string }) {
  return (
    <label className={`flex shrink-0 items-center gap-2 ${width}`}>
      <span className="flex h-5 w-5 shrink-0 items-center justify-center rounded-full border-2 border-black bg-white">
        <span className="flex h-[13px] w-[13px] items-center justify-center rounded-full border border-[#bdbdbd] bg-[#dddddd]">
          {checked && <span className="h-[5px] w-[5px] rounded-full bg-[#555]" />}
        </span>
      </span>
      <span className="whitespace-nowrap">{label}</span>
    </label>
  );
}

function Chart() {
  return (
    <svg className="block h-[129px] w-[1333px]" viewBox="0 463 1333 129">
      <text x="561" y="495" textLength="211.500" lengthAdjust="spacingAndGlyphs" fontFamily="Roboto, sans-serif" fontWeight="900" fontSize="34.500" fill="#333" stroke="#333" strokeWidth="1.700">Map Data Charts</text>
      <path d="M1303 472.500H1320M1303 478.500H1320M1303 484H1320" stroke="#000" strokeWidth="2.600" />
      <path d="M32 511.500H1323M32 545.500H1323M32 579.500H1323M37.500 511V592" stroke="#666" strokeWidth="1" />
      <rect x="78" y="542" width="5" height="50" fill="#7f6084" />
      <g fontFamily="'Noto Sans', sans-serif" fontSize="12.500" fill="#222" textAnchor="end">
        <text x="27" y="515">180</text>
        <text x="27" y="549">160</text>
        <text x="27" y="583">140</text>
      </g>
    </svg>
  );
}

export default function App() {
  return (
    <div className="h-[592px] w-full overflow-hidden bg-white font-['Liberation_Serif',serif] text-base text-black">
      <h1 className="flex h-[66px] items-start pt-2 text-[32px] leading-[36px] font-bold">frontend-task</h1>
      <MapView />
      <div className="flex h-5 items-center leading-5">
        <span className="w-[91px] shrink-0">Pick the filter</span>
        <Radio label="Fuel" checked width="w-[57px]" />
        <Radio label="Cards" width="w-[65px]" />
        <Radio label="Station Name" width="w-[115px]" />
        <Radio label="LPG" width="w-[60px]" />
      </div>
      <input
        className="block h-[21px] w-[124px] border border-[#a9a9a9] px-px font-['Liberation_Sans',sans-serif] text-[13.333px] placeholder:text-[#757575]"
        placeholder="Filter Property Text"
      />
      <div className="grid h-14 w-[1333px] grid-cols-[188px_137px_412px_133px_186px_1fr] items-center border-b border-black pb-0.5 pl-6 font-bold">
        <span>No.</span>
        <span>Fuel</span>
        <span>Station Name</span>
        <span>City</span>
        <span>Cards</span>
        <span>LPG</span>
      </div>
      <Chart />
    </div>
  );
}
